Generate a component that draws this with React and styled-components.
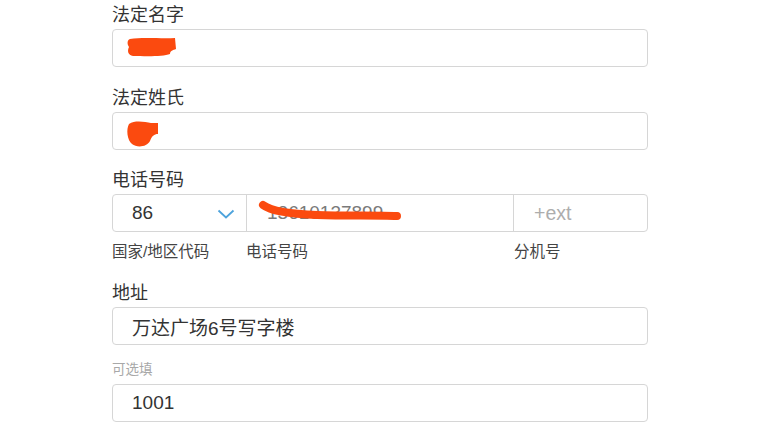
import styled, {createGlobalStyle} from "styled-components";

const GlobalStyle = createGlobalStyle`
  html, body {
    margin: 0;
    padding: 0;
    background: #ffffff;
  }
  body {
    font-family: "Liberation Sans", "Noto Sans CJK SC", sans-serif;
    color: #333333;
  }
`

const SCRIBBLE = "#fb4a0f";

function App() {
    return (
        <>
            <GlobalStyle/>
            <Form>
                <Field>
                    <Label>法定名字</Label>
                    <InputBox>
                        <Scribble width="80" height="38">
                            <path d="M17 9 C 30 7, 50 9, 62 8 L 63 19 C 60 20, 57 21, 57 24 C 50 27, 30 26, 20 26 C 15 25, 14 21, 16 17 C 14 14, 14 10, 17 9 Z"
                                  fill={SCRIBBLE}/>
                        </Scribble>
                    </InputBox>
                </Field>

                <Field>
                    <Label>法定姓氏</Label>
                    <InputBox>
                        <Scribble width="80" height="38">
                            <path d="M16 11 C 22 7, 32 9, 38 10 L 45 10 L 45 21 C 41 21, 39 23, 37 28 C 34 34, 24 35, 19 31 C 14 27, 13 16, 16 11 Z"
                                  fill={SCRIBBLE}/>
                        </Scribble>
                    </InputBox>
                </Field>

                <Field>
                    <Label>电话号码</Label>
                    <PhoneBox>
                        <PhoneCell>
                            <Value>86</Value>
                            <Chevron width="18" height="12" viewBox="0 0 18 12">
                                <path d="M1.5 2.5 L9 9.5 L16.5 2.5" fill="none" stroke="#4da3dc" strokeWidth="1.8"/>
                            </Chevron>
                        </PhoneCell>
                        <PhoneCell $divided>
                            <Value $muted>13610137899</Value>
                            <Scribble width="170" height="36">
                                <path d="M16 10 C 24 16, 40 19, 70 20 C 100 21, 130 20, 150 21"
                                      fill="none" stroke={SCRIBBLE} strokeWidth="8" strokeLinecap="round"/>
                            </Scribble>
                        </PhoneCell>
                        <PhoneCell $divided>
                            <Placeholder>+ext</Placeholder>
                        </PhoneCell>
                    </PhoneBox>
                    <SubLabels>
                        <SubLabel>国家/地区代码</SubLabel>
                        <SubLabel>电话号码</SubLabel>
                        <SubLabel>分机号</SubLabel>
                    </SubLabels>
                </Field>

                <Field>
                    <Label>地址</Label>
                    <InputBox>
                        <Value>万达广场6号写字楼</Value>
                    </InputBox>
                </Field>

                <Field>
                    <Hint>可选填</Hint>
                    <InputBox>
                        <Value>1001</Value>
                    </InputBox>
                </Field>
            </Form>
        </>
    )
}

export default App

const Form = styled.div`
  width: 536px;
  padding-top: 1px;
  padding-left: 112px;
  display: flex;
  flex-direction: column;
`
const Field = styled.div`
  display: flex;
  flex-direction: column;
  margin-bottom: 16.5px;
`
const Label = styled.div`
  font-size: 18px;
  line-height: 24px;
  height: 24px;
  color: #333333;
  margin-top: 2px;
  margin-bottom: 2px;
`
const Hint = styled.div`
  font-size: 13.5px;
  line-height: 18px;
  height: 18px;
  color: #a8a8a8;
  margin-top: -0.5px;
  margin-bottom: 4.5px;
`
const InputBox = styled.div`
  position: relative;
  box-sizing: border-box;
  height: 38px;
  border: 1px solid #d6d6d6;
  border-radius: 4px;
  display: flex;
  align-items: center;
  padding-left: 19px;
`
const Value = styled.span`
  font-size: 19px;
  color: ${(p) => (p.$muted ? "#7a7a7a" : "#333333")};
`
const Placeholder = styled.span`
  font-size: 19.5px;
  color: #adadad;
`
const Scribble = styled.svg`
  position: absolute;
  left: 0;
  top: 0;
  overflow: visible;
`
const PhoneBox = styled.div`
  box-sizing: border-box;
  height: 38px;
  border: 1px solid #d6d6d6;
  border-radius: 4px;
  display: grid;
  grid-template-columns: 133px 1fr 134px;
`
const PhoneCell = styled.div`
  position: relative;
  display: flex;
  align-items: center;
  padding-left: ${(p) => (p.$divided ? "20px" : "19px")};
  border-left: ${(p) => (p.$divided ? "1px solid #d6d6d6" : "none")};
`
const Chevron = styled.svg`
  position: absolute;
  left: 104px;
  top: 13px;
`
const SubLabels = styled.div`
  display: grid;
  grid-template-columns: 134px 1fr 134px;
  margin-top: 10px;
  margin-bottom: 0.5px;
`
const SubLabel = styled.div`
  font-size: 15.5px;
  line-height: 20px;
  color: #444444;
`
